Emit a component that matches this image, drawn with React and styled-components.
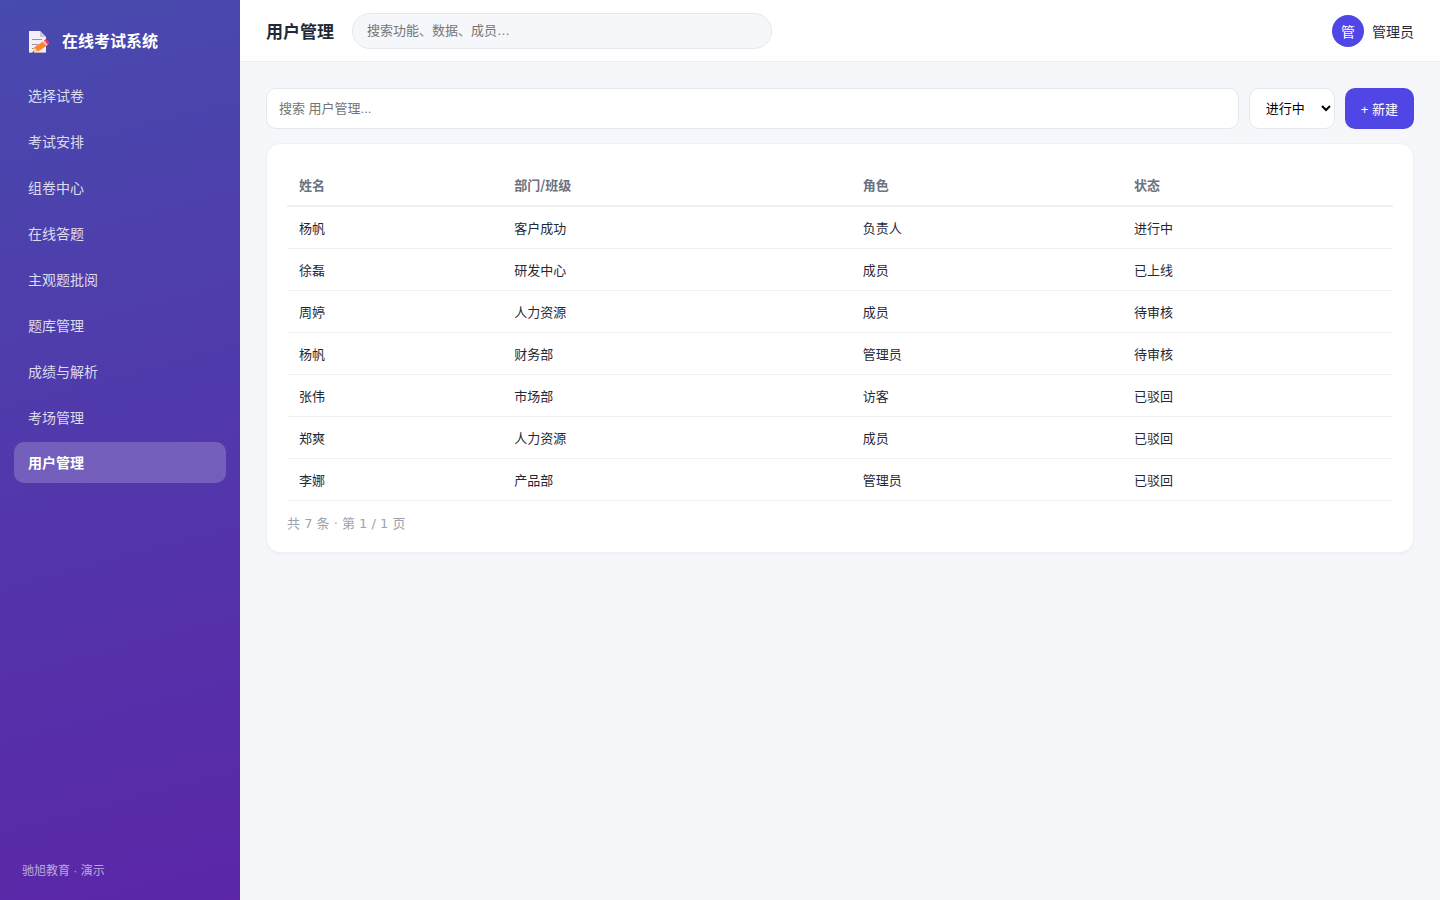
import styled, { createGlobalStyle } from 'styled-components'

const latinFirst = `'Liberation Sans', 'Noto Sans CJK SC', sans-serif`

const GlobalStyle = createGlobalStyle`
  * {
    box-sizing: border-box;
  }
  body {
    margin: 0;
    background: #f5f7fb;
    color: #1f2937;
    font-family: 'Noto Sans CJK SC', sans-serif;
    font-size: 14px;
  }
  button, input, select {
    font-family: ${latinFirst};
  }
`

const Layout = styled.div`
  display: flex;
  min-height: 100vh;
`

const Sidebar = styled.aside`
  display: flex;
  flex-direction: column;
  flex: 0 0 240px;
  padding: 22px 14px 20px;
  background: linear-gradient(165deg, #484aae, #5b26a8);
  color: #fff;
`

const Brand = styled.div`
  display: flex;
  align-items: center;
  gap: 12px;
  height: 36px;
  margin-bottom: 16px;
  padding: 0 14px;
  font-size: 16px;
  font-weight: 700;
`

const Nav = styled.nav`
  display: flex;
  flex-direction: column;
  gap: 4px;
`

const NavItem = styled.a`
  padding: 12px 14px;
  border-radius: 10px;
  background: ${({ $active }) => ($active ? 'rgba(255, 255, 255, 0.2)' : 'transparent')};
  color: ${({ $active }) => ($active ? '#fff' : 'rgba(255, 255, 255, 0.82)')};
  font-size: 14px;
  font-weight: ${({ $active }) => ($active ? 700 : 400)};
  line-height: ${({ $active }) => ($active ? '17px' : '18px')};
  text-decoration: none;
`

const SideFooter = styled.div`
  margin-top: auto;
  padding: 0 8px;
  color: rgba(255, 255, 255, 0.6);
  font-family: ${latinFirst};
  font-size: 12px;
  line-height: 17px;
`

const Main = styled.div`
  flex: 1;
  min-width: 0;
`

const Header = styled.header`
  display: flex;
  align-items: center;
  gap: 18px;
  height: 62px;
  padding: 0 26px;
  border-bottom: 1px solid #eceef4;
  background: #fff;
`

const Title = styled.h1`
  margin: 0;
  font-size: 17px;
  font-weight: 700;
`

const GlobalSearch = styled.input`
  width: 420px;
  height: 36px;
  padding: 0 14px;
  border: 1px solid #e5e7ef;
  border-radius: 18px;
  background: #f6f7fb;
  font-size: 13px;
`

const User = styled.div`
  display: flex;
  align-items: center;
  gap: 8px;
  margin-left: auto;
`

const Avatar = styled.span`
  display: grid;
  place-items: center;
  width: 32px;
  height: 32px;
  border-radius: 50%;
  background: #4f46e5;
  color: #fff;
`

const Content = styled.main`
  padding: 26px;
`

const Toolbar = styled.div`
  display: flex;
  gap: 10px;
  height: 41px;
  margin-bottom: 14px;
`

const SearchInput = styled.input`
  flex: 1;
  min-width: 0;
  padding: 0 12px;
  border: 1px solid #e5e7ef;
  border-radius: 10px;
  background: #fff;
  font-size: 13px;
`

const StatusSelect = styled.select`
  padding: 0 12px;
  border: 1px solid #e5e7ef;
  border-radius: 10px;
  background: #fff;
  color: #000;
  font-size: 13px;
`

const CreateButton = styled.button`
  padding: 0 16px;
  border: 0;
  border-radius: 10px;
  background: #4f46e5;
  color: #fff;
  font-size: 13px;
`

const Card = styled.section`
  padding: 20px;
  border: 1px solid #eef0f5;
  border-radius: 14px;
  background: #fff;
  box-shadow: 0 1px 3px rgba(16, 24, 40, 0.04);
`

const Table = styled.table`
  width: 100%;
  border-collapse: separate;
  border-spacing: 0;
  font-size: 13px;
  line-height: 17px;
  text-align: left;

  th {
    padding: 12px;
    border-bottom: 2px solid #eef0f5;
    color: #6b7280;
    font-weight: 700;
  }
  td {
    padding: 12px;
    border-bottom: 1px solid #eef0f5;
  }
`

const Pager = styled.div`
  margin-top: 14px;
  color: #9ca3af;
  font-family: 'DejaVu Sans', 'Noto Sans CJK SC', sans-serif;
  font-size: 13px;
  line-height: 17px;
`

const menu = ['选择试卷', '考试安排', '组卷中心', '在线答题', '主观题批阅', '题库管理', '成绩与解析', '考场管理', '用户管理']

const columns = ['姓名', '部门/班级', '角色', '状态']

const rows = [
  ['杨帆', '客户成功', '负责人', '进行中'],
  ['徐磊', '研发中心', '成员', '已上线'],
  ['周婷', '人力资源', '成员', '待审核'],
  ['杨帆', '财务部', '管理员', '待审核'],
  ['张伟', '市场部', '访客', '已驳回'],
  ['郑爽', '人力资源', '成员', '已驳回'],
  ['李娜', '产品部', '管理员', '已驳回'],
]

const MemoIcon = () => (
  <svg width="22" height="28" viewBox="0 -4 22 28" aria-hidden="true">
    <path d="M1 1h11l6 6v16H1z" fill="#f3eef8" />
    <path d="M12 1l6 6h-6z" fill="#cdc4d6" />
    <path d="M1 22h17v1H1z" fill="#b9aec4" />
    <path d="M4 9.500h10M4 14.500h6M4 18.500h2" stroke="#998ea4" />
    <path d="M15 11.500l4 4-9 6-4-4z" fill="#ff822d" />
    <path d="M6 17.500l4 4-5 1.500z" fill="#ffce7c" />
    <path d="M5 21l1.500 1.500L4.500 23z" fill="#402a32" />
    <path d="M14.500 11.800l1.500-1.300 4 4-1.500 1.300z" fill="#d3d3d3" />
    <path d="M16 10.500l1-1q1-.7 2 .3l2 2q1 1 0 1.800l-1 .9z" fill="#f8315f" />
  </svg>
)

const App = () => {
  return (
    <Layout>
      <GlobalStyle />
      <Sidebar>
        <Brand>
          <MemoIcon />
          <span>在线考试系统</span>
        </Brand>
        <Nav>
          {menu.map((item) => (
            <NavItem key={item} href="#" $active={item === '用户管理'}>{item}</NavItem>
          ))}
        </Nav>
        <SideFooter>驰旭教育 · 演示</SideFooter>
      </Sidebar>
      <Main>
        <Header>
          <Title>用户管理</Title>
          <GlobalSearch type="text" aria-label="搜索" placeholder="搜索功能、数据、成员…" />
          <User>
            <Avatar>管</Avatar>
            <span>管理员</span>
          </User>
        </Header>
        <Content>
          <Toolbar>
            <SearchInput type="text" aria-label="搜索 用户管理" placeholder="搜索 用户管理..." />
            <StatusSelect aria-label="状态" defaultValue="进行中">
              <option>进行中</option>
              <option>已上线</option>
              <option>待审核</option>
              <option>已驳回</option>
            </StatusSelect>
            <CreateButton type="button">+ 新建</CreateButton>
          </Toolbar>
          <Card>
            <Table>
              <thead>
                <tr>
                  {columns.map((name) => <th key={name} scope="col">{name}</th>)}
                </tr>
              </thead>
              <tbody>
                {rows.map((row, i) => (
                  <tr key={i}>
                    {row.map((cell, j) => <td key={j}>{cell}</td>)}
                  </tr>
                ))}
              </tbody>
            </Table>
            <Pager>共 7 条 · 第 1 / 1 页</Pager>
          </Card>
        </Content>
      </Main>
    </Layout>
  )
}

export default App
